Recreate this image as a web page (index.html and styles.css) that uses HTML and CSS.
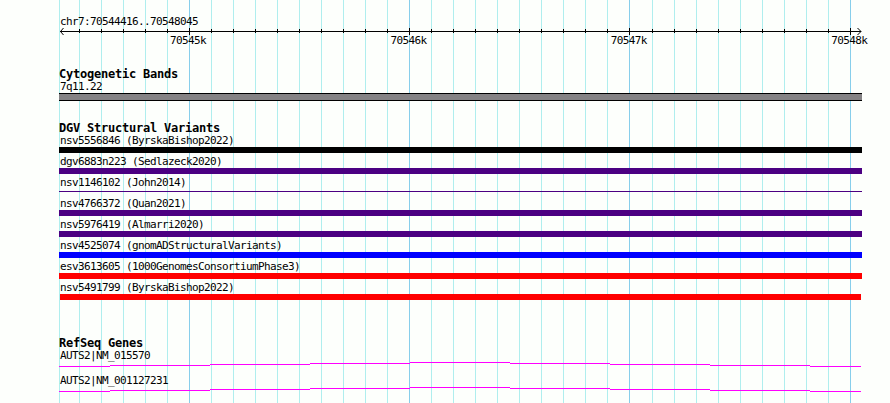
FILE: index.html
```html
<!DOCTYPE html>
<html lang="en">
<head>
    <meta charset="UTF-8">
    <title>chr7:70544416..70548045</title>
    <link rel="stylesheet" href="styles.css">
</head>
<body>
    <div class="browser">
        <svg class="grid" id="grid" width="890" height="403"></svg>

        <div class="panel">
            <div class="ruler">
                <div class="label">chr7:70544416..70548045</div>
                <svg class="axis" id="axis" width="804" height="9">
                    <path d="M1 4.5H802" />
                    <path d="M4.5 1L1.5 4.5L4.5 8M798.5 1L802 4.5L798.5 8" class="arrow" />
                </svg>
                <div class="ticks">
                    <span>70545k</span>
                    <span>70546k</span>
                    <span>70547k</span>
                    <span>70548k</span>
                </div>
            </div>

            <div class="track bands">
                <h2>Cytogenetic Bands</h2>
                <div class="label">7q11.22</div>
                <div class="band"></div>
            </div>

            <div class="track variants">
                <h2>DGV Structural Variants</h2>
                <div class="feature"><div class="label">nsv5556846 (ByrskaBishop2022)</div><div class="bar black"></div></div>
                <div class="feature"><div class="label">dgv6883n223 (Sedlazeck2020)</div><div class="bar purple"></div></div>
                <div class="feature"><div class="label">nsv1146102 (John2014)</div><div class="bar purple thin"></div></div>
                <div class="feature"><div class="label">nsv4766372 (Quan2021)</div><div class="bar purple"></div></div>
                <div class="feature"><div class="label">nsv5976419 (Almarri2020)</div><div class="bar purple"></div></div>
                <div class="feature"><div class="label">nsv4525074 (gnomADStructuralVariants)</div><div class="bar blue"></div></div>
                <div class="feature"><div class="label">esv3613605 (1000GenomesConsortiumPhase3)</div><div class="bar red"></div></div>
                <div class="feature"><div class="label">nsv5491799 (ByrskaBishop2022)</div><div class="bar red inset"></div></div>
            </div>

            <div class="track genes">
                <h2>RefSeq Genes</h2>
                <div class="gene">
                    <div class="label">AUTS2|NM_015570</div>
                    <svg class="intron" width="802" height="5"><path d="M0 4.5H51M51 3.5H151M151 2.5H251M251 1.5H351M351 0.5H451M451 1.5H551M551 2.5H651M651 3.5H751M751 4.5H802" /></svg>
                </div>
                <div class="gene">
                    <div class="label">AUTS2|NM_001127231</div>
                    <svg class="intron" width="802" height="5"><path d="M0 4.5H51M51 3.5H151M151 2.5H251M251 1.5H351M351 0.5H451M451 1.5H551M551 2.5H651M651 3.5H751M751 4.5H802" /></svg>
                </div>
            </div>
        </div>
    </div>

    <script>
        const start = 70544416;
        const scale = 800 / 3630;
        const left = 60;

        function addLine(svg, x, y1, y2, cls) {
            const line = document.createElementNS('http://www.w3.org/2000/svg', 'path');
            line.setAttribute('d', 'M' + (x + 0.5) + ' ' + y1 + 'V' + y2);
            if (cls) line.setAttribute('class', cls);
            svg.appendChild(line);
        }

        const grid = document.getElementById('grid');
        const axis = document.getElementById('axis');
        addLine(grid, 59, 0, 403);

        // one line every 100 bp, a darker one every 1000 bp
        for (let pos = 70544500; pos <= 70548000; pos += 100) {
            const x = Math.round(left + (pos - start) * scale);
            const major = pos % 1000 === 0;
            addLine(grid, x, 0, 403, major ? 'major' : '');
            addLine(axis, x - 59, major ? 1 : 2, major ? 8 : 6);
        }
    </script>
</body>
</html>
```

FILE: styles.css
```css
body {
    margin: 0;
    background-color: #fdfffc;
    color: #000;
    font-family: "DejaVu Sans Mono", monospace;
    font-size: 11px;
}

.browser {
    position: relative;
    width: 890px;
    height: 403px;
    overflow: hidden;
}

/* grid lines behind all the tracks */
.grid {
    position: absolute;
    top: 0;
    left: 0;
}

svg path {
    fill: none;
    stroke: #000;
    shape-rendering: crispEdges;
}

.grid path {
    stroke: #afeeee;
}

.grid path.major {
    stroke: #87ceeb;
}

.axis .arrow {
    shape-rendering: auto;
}

.panel {
    position: relative;
    margin-left: 59px;
    padding-top: 15px;
}

svg.axis, .intron {
    display: block;
}

.label {
    height: 12px;
    line-height: 14px;
    padding-left: 1px;
    letter-spacing: -0.622px;
    white-space: pre;
}

.ruler {
    height: 53px;
}

.ticks {
    display: grid;
    grid-template-columns: repeat(4, 220.4px);
    margin-left: 111px;
    line-height: 10px;
    letter-spacing: -0.622px;
}

h2 {
    margin: 0;
    height: 12px;
    line-height: 13px;
    font-size: 12px;
    font-weight: bold;
    letter-spacing: -0.224px;
}

.bands {
    height: 54px;
}

.band {
    width: 803px;
    height: 8px;
    box-sizing: border-box;
    margin-top: 1px;
    background-color: #848284;
    border-top: 1px solid #000;
    border-bottom: 1px solid #000;
}

.variants {
    height: 215px;
}

.feature {
    height: 21px;
}

.bar {
    width: 803px;
    height: 6px;
    margin-top: 1px;
}

.black {
    background-color: #000;
}

.purple {
    background-color: #4b0082;
}

.blue {
    background-color: #00f;
}

.red {
    background-color: #f00;
}

.thin {
    height: 1px;
    margin-top: 3px;
}

.inset {
    width: 801px;
    margin-left: 1px;
}

.gene {
    height: 25px;
}

.intron {
    margin-top: 1px;
}

.intron path {
    stroke: #f0f;
}
```
